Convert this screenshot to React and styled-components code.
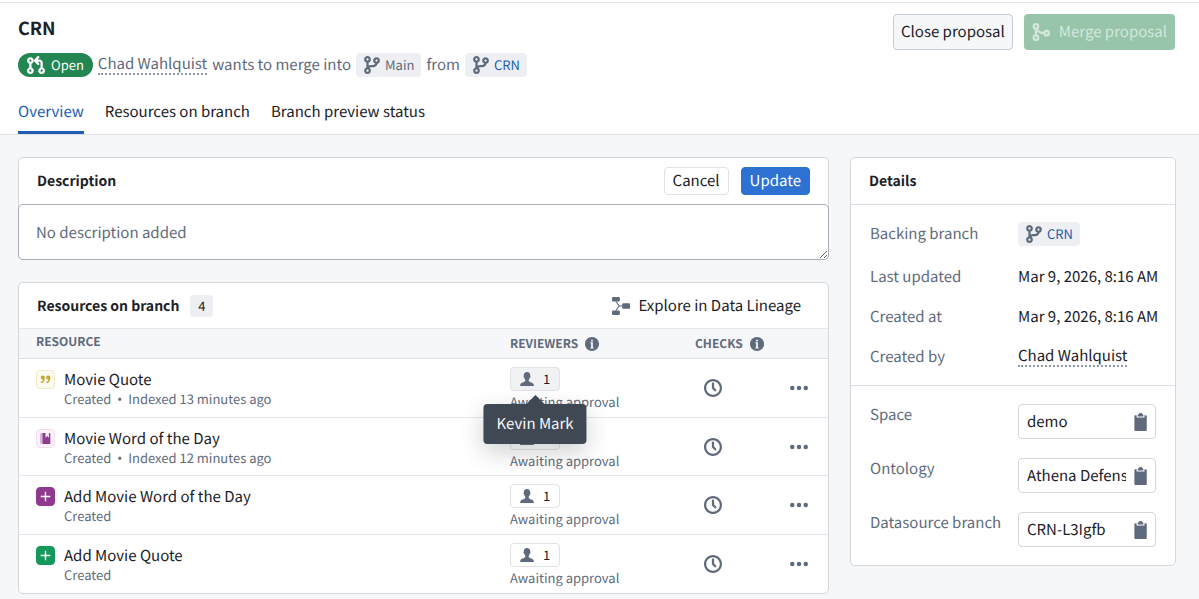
import React, { useState } from "react";
import styled, { createGlobalStyle } from "styled-components";

const GlobalStyle = createGlobalStyle`
    * {
        box-sizing: border-box;
    }
    body {
        margin: 0;
        background: #f6f7f9;
        color: #1c2127;
        font-family: "Noto Sans CJK SC", "Noto Sans", sans-serif;
        font-size: 15px;
        line-height: 22px;
        text-rendering: geometricPrecision;
    }
    button,
    input,
    textarea {
        margin: 0;
        font: inherit;
        color: inherit;
        text-rendering: inherit;
    }
`;

const icons = {
    branch: (
        <path d="M12 1c-1.66 0-3 1.34-3 3 0 1.25.76 2.32 1.85 2.77A2.02 2.02 0 019 8H7c-.73 0-1.41.21-2 .55V5.82C6.16 5.4 7 4.3 7 3c0-1.66-1.34-3-3-3S1 1.34 1 3c0 1.3.84 2.4 2 2.82v4.37c-1.16.4-2 1.51-2 2.81 0 1.66 1.34 3 3 3s3-1.34 3-3c0-1.04-.53-1.95-1.32-2.49.35-.31.81-.51 1.32-.51h2c1.92 0 3.52-1.35 3.91-3.15A2.996 2.996 0 0012 1zM4 2c.55 0 1 .45 1 1s-.45 1-1 1-1-.45-1-1 .45-1 1-1zm0 12c-.55 0-1-.45-1-1s.45-1 1-1 1 .45 1 1-.45 1-1 1zm8-9c-.55 0-1-.45-1-1s.45-1 1-1 1 .45 1 1-.45 1-1 1z" />
    ),
    pull: (
        <path d="M3 1c-1.66 0-3 1.34-3 3 0 1.3.84 2.4 2 2.82v3.37C.84 10.6 0 11.7 0 13c0 1.66 1.34 3 3 3s3-1.34 3-3c0-1.3-.84-2.4-2-2.82V6.82C5.16 6.4 6 5.3 6 4c0-1.66-1.34-3-3-3zm0 13c-.55 0-1-.45-1-1s.45-1 1-1 1 .45 1 1-.45 1-1 1zM3 5c-.55 0-1-.45-1-1s.45-1 1-1 1 .45 1 1-.45 1-1 1zm11 5.18V6c0-1.66-1.34-3-3-3H9.41l1.29-1.29c.19-.18.3-.43.3-.71A1.003 1.003 0 009.29.29l-3 3C6.11 3.47 6 3.72 6 4c0 .28.11.53.29.71l3 3a1.003 1.003 0 001.42-1.42L9.41 5H11c.55 0 1 .45 1 1v4.18A2.996 2.996 0 0013 16c1.66 0 3-1.34 3-3 0-1.3-.84-2.4-2-2.82zM13 14c-.55 0-1-.45-1-1s.45-1 1-1 1 .45 1 1-.45 1-1 1z" />
    ),
    merge: (
        <g fill="none" stroke="currentColor" strokeWidth="2">
            <circle cx="3.500" cy="3" r="2" />
            <circle cx="3.500" cy="13" r="2" />
            <circle cx="13" cy="9" r="2" />
            <path d="M3.500 5v6M4 4.500C5 7.500 7 9 11 9" />
        </g>
    ),
    info: (
        <path d="M8 0C3.58 0 0 3.58 0 8s3.58 8 8 8 8-3.58 8-8-3.58-8-8-8zM7 3h2v2H7V3zm3 10H6v-1h1V7H6V6h3v6h1v1z" />
    ),
    time: (
        <path d="M8 0C3.58 0 0 3.58 0 8s3.58 8 8 8 8-3.58 8-8-3.58-8-8-8zm0 14c-3.31 0-6-2.69-6-6s2.69-6 6-6 6 2.69 6 6-2.69 6-6 6zm1-6.41V4c0-.55-.45-1-1-1s-1 .45-1 1v4c0 .28.11.53.29.71l2 2a1.003 1.003 0 001.42-1.42L9 7.59z" />
    ),
    clipboard: (
        <path d="M11 2c0-.55-.45-1-1-1h.22C9.88.4 9.24 0 8.5 0S7.12.4 6.78 1H7c-.55 0-1 .45-1 1v1h5V2zm2 0h-1v2H5V2H4c-.55 0-1 .45-1 1v12c0 .55.45 1 1 1h9c.55 0 1-.45 1-1V3c0-.55-.45-1-1-1z" />
    ),
    person: (
        <path d="M8 0C5.7 0 4.2 1.6 4.3 4c0 .5-.4.7-.3 1.300.1.6.5.8.7 1.100.2 1 .7 1.700 1.300 2.200v1.700C5.200 11.800 1 12 .4 14.300c-.2.5-.3 1-.3 1.700h15.800c0-.7-.1-1.200-.3-1.700C15 12 10.800 11.800 10 10.300V8.600c.6-.5 1.100-1.200 1.300-2.200.2-.3.6-.5.7-1.100.1-.6-.3-.8-.3-1.300C11.800 1.600 10.300 0 8 0z" />
    ),
    more: (
        <g>
            <circle cx="2" cy="8" r="2" />
            <circle cx="8" cy="8" r="2" />
            <circle cx="14" cy="8" r="2" />
        </g>
    ),
    lineage: (
        <g>
            <rect x="0" y="0" width="7" height="4" rx="1" />
            <rect x="0" y="12" width="7" height="4" rx="1" />
            <rect x="9" y="5.5" width="7" height="5" rx="1" />
            <path
                d="M3.500 4L6.500 8L3.500 12M6 8h3"
                fill="none"
                stroke="currentColor"
                strokeWidth="1"
            />
        </g>
    ),
    citation: (
        <path d="M15.020 5c0-1.660-1.340-3-3-3s-3 1.340-3 3a2.996 2.996 0 003.600 2.940C12.100 9.760 11.140 11 10.020 11c-.55 0-1 .45-1 1s.45 1 1 1c2.800 0 5-3.500 5-8zm-11-3c-1.660 0-3 1.340-3 3a2.996 2.996 0 003.600 2.940C4.100 9.760 3.140 11 2.020 11c-.55 0-1 .45-1 1s.45 1 1 1c2.800 0 5-3.500 5-8 0-1.660-1.340-3-3-3z" />
    ),
    book: (
        <path d="M1 1.500C1 .7 1.500 0 2 0v16c-.6 0-1-.5-1-1V1.500zM3.500 0H8v7l2.500-2.500L13 7V0h1c.6 0 1 .4 1 1v14c0 .6-.4 1-1 1H3.500V0z" />
    ),
    plus: <path d="M7 1h2v6h6v2H9v6H7V9H1V7h6V1z" />,
};

function Icon({ name, size = 18 }) {
    return (
        <Svg width={size} height={size} viewBox="0 0 16 16" aria-hidden="true">
            {icons[name]}
        </Svg>
    );
}

function BranchTag({ children, linked }) {
    return (
        <Tag as={linked ? "a" : "span"} href={linked ? "#branch" : undefined}>
            <Icon name="branch" />
            <TagText $linked={linked}>{children}</TagText>
        </Tag>
    );
}

const tabs = ["Overview", "Resources on branch", "Branch preview status"];

const resources = [
    {
        title: "Movie Quote",
        note: "Indexed 13 minutes ago",
        icon: "citation",
        color: "#c9a52c",
        background: "#fdfaf0",
        border: "#f3e9c4",
        tooltip: "Kevin Mark",
    },
    {
        title: "Movie Word of the Day",
        note: "Indexed 12 minutes ago",
        icon: "book",
        color: "#8f398f",
        background: "#fbf2fb",
        border: "#f0dcf0",
    },
    {
        title: "Add Movie Word of the Day",
        icon: "plus",
        color: "#ffffff",
        background: "#8f398f",
        border: "#8f398f",
    },
    {
        title: "Add Movie Quote",
        icon: "plus",
        color: "#ffffff",
        background: "#15995b",
        border: "#15995b",
    },
];

const fields = [
    { id: "space", label: "Space", value: "demo" },
    { id: "ontology", label: "Ontology", value: "Athena Defense" },
    { id: "datasource", label: "Datasource branch", value: "CRN-L3Igfb" },
];

function ResourceRow({ item }) {
    return (
        <Row>
            <td>
                <Resource>
                    <ResourceIcon
                        $color={item.color}
                        $background={item.background}
                        $border={item.border}
                    >
                        <Icon name={item.icon} size={11} />
                    </ResourceIcon>
                    <div>
                        <ResourceTitle>{item.title}</ResourceTitle>
                        <Note>
                            <span>Created</span>
                            {item.note && <Bullet>•</Bullet>}
                            {item.note && <span>{item.note}</span>}
                        </Note>
                    </div>
                </Resource>
            </td>
            <td>
                <Reviewers>
                    <ReviewerAnchor>
                        <ReviewerButton $active={Boolean(item.tooltip)}>
                            <Icon name="person" size={14} />
                            1
                        </ReviewerButton>
                        {item.tooltip && (
                            <Tooltip role="tooltip">{item.tooltip}</Tooltip>
                        )}
                    </ReviewerAnchor>
                    <Note>Awaiting approval</Note>
                </Reviewers>
            </td>
            <td>
                <CheckStatus>
                    <Icon name="time" />
                </CheckStatus>
            </td>
            <td>
                <IconButton aria-label={`More actions for ${item.title}`}>
                    <Icon name="more" />
                </IconButton>
            </td>
        </Row>
    );
}

function App() {
    const [tab, setTab] = useState(tabs[0]);
    const [description, setDescription] = useState("");

    return (
        <Page>
            <GlobalStyle />
            <Header>
                <HeaderTop>
                    <div>
                        <Title>CRN</Title>
                        <Meta>
                            <Status>
                                <Icon name="pull" />
                                Open
                            </Status>
                            <UserLink href="#user">Chad Wahlquist</UserLink>
                            <span>wants to merge into</span>
                            <BranchTag>Main</BranchTag>
                            <span>from</span>
                            <BranchTag linked>CRN</BranchTag>
                        </Meta>
                    </div>
                    <Actions>
                        <CloseButton>Close proposal</CloseButton>
                        <MergeButton disabled>
                            <Icon name="merge" />
                            Merge proposal
                        </MergeButton>
                    </Actions>
                </HeaderTop>
                <Tabs role="tablist">
                    {tabs.map((el) => (
                        <Tab
                            key={el}
                            role="tab"
                            aria-selected={el === tab}
                            $active={el === tab}
                            onClick={() => setTab(el)}
                        >
                            {el}
                        </Tab>
                    ))}
                </Tabs>
            </Header>
            <Content>
                <Main>
                    <Card>
                        <CardHeader>
                            <CardTitle id="description-title">
                                Description
                            </CardTitle>
                            <CardActions>
                                <SmallButton>Cancel</SmallButton>
                                <SmallButton $primary>Update</SmallButton>
                            </CardActions>
                        </CardHeader>
                        <Description
                            aria-labelledby="description-title"
                            placeholder="No description added"
                            value={description}
                            onChange={(el) => setDescription(el.target.value)}
                        />
                    </Card>
                    <Card>
                        <CardHeader $height={45}>
                            <CardTitle>
                                Resources on branch
                                <Count>4</Count>
                            </CardTitle>
                            <LineageButton>
                                <Icon name="lineage" />
                                Explore in Data Lineage
                            </LineageButton>
                        </CardHeader>
                        <Table>
                            <colgroup>
                                <col />
                                <Col $width={185} />
                                <Col $width={75} />
                                <Col $width={58} />
                            </colgroup>
                            <thead>
                                <tr>
                                    <Th scope="col">RESOURCE</Th>
                                    <Th scope="col">
                                        <ThInner>
                                            REVIEWERS
                                            <Icon name="info" size={14} />
                                        </ThInner>
                                    </Th>
                                    <Th scope="col" colSpan={2}>
                                        <ThInner>
                                            CHECKS
                                            <Icon name="info" size={14} />
                                        </ThInner>
                                    </Th>
                                </tr>
                            </thead>
                            <tbody>
                                {resources.map((item) => (
                                    <ResourceRow key={item.title} item={item} />
                                ))}
                            </tbody>
                        </Table>
                    </Card>
                </Main>
                <Card as="aside">
                    <CardHeader $height={47} $divided>
                        <CardTitle>Details</CardTitle>
                    </CardHeader>
                    <Facts>
                        <Fact $tall>
                            <dt>Backing branch</dt>
                            <dd>
                                <BranchTag linked>CRN</BranchTag>
                            </dd>
                        </Fact>
                        <Fact>
                            <dt>Last updated</dt>
                            <dd>Mar 9, 2026, 8:16 AM</dd>
                        </Fact>
                        <Fact>
                            <dt>Created at</dt>
                            <dd>Mar 9, 2026, 8:16 AM</dd>
                        </Fact>
                        <Fact>
                            <dt>Created by</dt>
                            <dd>
                                <UserLink href="#user">Chad Wahlquist</UserLink>
                            </dd>
                        </Fact>
                    </Facts>
                    <Fields>
                        {fields.map((el) => (
                            <Field key={el.id}>
                                <label htmlFor={el.id}>{el.label}</label>
                                <CopyBox>
                                    <CopyInput
                                        id={el.id}
                                        value={el.value}
                                        readOnly
                                    />
                                    <IconButton aria-label={`Copy ${el.label}`}>
                                        <Icon name="clipboard" />
                                    </IconButton>
                                </CopyBox>
                            </Field>
                        ))}
                    </Fields>
                </Card>
            </Content>
        </Page>
    );
}

const Svg = styled.svg`
    display: block;
    flex: none;
    fill: currentColor;
`;

const Page = styled.div`
    padding-top: 2px;
    background: #ffffff;
`;

const Header = styled.header`
    padding: 0 24px 0 18px;
    border-top: 1px solid #e5e8eb;
    border-bottom: 1px solid #dce0e5;
`;

const HeaderTop = styled.div`
    display: flex;
    justify-content: space-between;
    align-items: flex-start;
    padding-top: 11px;
`;

const Title = styled.h1`
    margin: 3px 0 14px;
    font-size: 18px;
    font-weight: 700;
    line-height: 22px;
`;

const Meta = styled.div`
    display: flex;
    flex-wrap: wrap;
    align-items: center;
    gap: 5px;
    color: #5f6b7c;
`;

const Status = styled.span`
    display: flex;
    align-items: center;
    gap: 6px;
    height: 24px;
    padding: 0 9px;
    border-radius: 12px;
    background: #238551;
    color: #ffffff;
    font-size: 13px;
`;

const UserLink = styled.a`
    color: inherit;
    line-height: 18px;
    text-decoration: none;
    border-bottom: 2px dotted #8f99a8;
`;

const Tag = styled.span`
    display: inline-flex;
    align-items: center;
    gap: 4px;
    height: 24px;
    padding: 0 7px;
    border-radius: 4px;
    background: #eeeff2;
    color: #5f6b7c;
    font-size: 13px;
    text-decoration: none;
`;

const TagText = styled.span`
    color: ${({ $linked }) => ($linked ? "#215db0" : "#5f6b7c")};
`;

const Actions = styled.div`
    display: flex;
    gap: 11px;
`;

const CloseButton = styled.button`
    height: 36px;
    padding: 0 7px;
    border: 1px solid #c5cbd3;
    border-radius: 4px;
    background: #f6f7f9;
    white-space: nowrap;
`;

const MergeButton = styled.button`
    display: flex;
    align-items: center;
    gap: 9px;
    height: 36px;
    padding: 0 8px;
    border: 0;
    border-radius: 4px;
    background: #98c5aa;
    color: #d3e7db;
    white-space: nowrap;
`;

const Tabs = styled.div`
    display: flex;
    gap: 21px;
    margin-top: 11px;
`;

const Tab = styled.button`
    height: 46px;
    padding: 5px 0 0;
    border: 0;
    border-bottom: 3px solid
        ${({ $active }) => ($active ? "#215db0" : "transparent")};
    background: none;
    color: ${({ $active }) => ($active ? "#215db0" : "#1c2127")};
`;

const Content = styled.div`
    display: grid;
    grid-template-columns: minmax(0, 1fr) 326px;
    align-items: start;
    gap: 21px;
    padding: 22px 23px 5px 18px;
    background: #f6f7f9;
`;

const Main = styled.main`
    display: flex;
    flex-direction: column;
    gap: 22px;
`;

const Card = styled.section`
    border: 1px solid #d3d7dc;
    border-radius: 5px;
    background: #ffffff;
`;

const CardHeader = styled.div`
    display: flex;
    justify-content: space-between;
    align-items: center;
    height: ${({ $height = 46 }) => $height}px;
    padding: 0 18px;
    ${({ $divided }) => $divided && "border-bottom: 1px solid #dce0e5;"}
`;

const CardTitle = styled.h2`
    display: flex;
    align-items: center;
    gap: 11px;
    margin: 0;
    font-size: 14px;
    font-weight: 700;
`;

const CardActions = styled.div`
    display: flex;
    gap: 12px;
`;

const SmallButton = styled.button`
    height: 28px;
    padding: 0 8px;
    border: 1px solid ${({ $primary }) => ($primary ? "#2d72d2" : "#dfe2e6")};
    border-radius: 4px;
    background: ${({ $primary }) => ($primary ? "#2d72d2" : "#ffffff")};
    color: ${({ $primary }) => ($primary ? "#ffffff" : "#1c2127")};
    line-height: 20px;
`;

const Description = styled.textarea`
    display: block;
    width: calc(100% + 2px);
    height: 56px;
    margin: 0 -1px -1px;
    padding: 17px 17px 15px;
    border: 1px solid #a9aeb5;
    border-radius: 5px;
    background: #ffffff;
    resize: vertical;

    &::placeholder {
        color: #5f6b7c;
    }
`;

const Count = styled.span`
    min-width: 23px;
    border-radius: 4px;
    background: #eeeff2;
    font-size: 13px;
    font-weight: 400;
    text-align: center;
`;

const LineageButton = styled.button`
    display: flex;
    align-items: center;
    gap: 8px;
    padding: 0 9px;
    border: 0;
    background: none;

    svg {
        color: #5f6b7c;
    }
`;

const Table = styled.table`
    width: 100%;
    table-layout: fixed;
    border-collapse: separate;
    border-spacing: 0;

    th:first-child,
    td:first-child {
        padding-left: 17px;
    }
`;

const Col = styled.col`
    width: ${({ $width }) => $width}px;
`;

const Th = styled.th`
    height: 31px;
    padding: 0;
    border-top: 1px solid #e5e8eb;
    border-bottom: 1px solid #dce0e5;
    background: #f6f7f9;
    color: #5f6b7c;
    font-size: 12px;
    font-weight: 700;
    line-height: 20px;
    text-align: left;

    &:first-child {
        padding-bottom: 3px;
    }
`;

const ThInner = styled.span`
    display: flex;
    align-items: center;
    gap: 7px;
`;

const Row = styled.tr`
    height: 58px;

    &:nth-child(odd) {
        height: 59px;
    }
    td {
        padding: 0;
        border-bottom: 1px solid #e5e8eb;
    }
    td:nth-child(-n + 2) {
        padding-top: 2px;
    }
    &:last-child td {
        border-bottom: 0;
    }
`;

const Resource = styled.div`
    display: flex;
    gap: 9px;
`;

const ResourceIcon = styled.span`
    display: flex;
    flex: none;
    align-items: center;
    justify-content: center;
    width: 19px;
    height: 19px;
    border: 1px solid ${({ $border }) => $border};
    border-radius: 4px;
    background: ${({ $background }) => $background};
    color: ${({ $color }) => $color};
`;

const ResourceTitle = styled.div`
    line-height: 20px;
`;

const Note = styled.div`
    display: flex;
    gap: 6px;
    color: #5f6b7c;
    font-size: 13px;
    line-height: 18px;
`;

const Bullet = styled.span`
    font-family: "Noto Sans", sans-serif;
`;

const Reviewers = styled.div`
    display: flex;
    flex-direction: column;
    align-items: flex-start;
    gap: 2px;
`;

const ReviewerAnchor = styled.div`
    position: relative;
`;

const ReviewerButton = styled.button`
    display: flex;
    align-items: center;
    gap: 9px;
    height: 24px;
    padding: 0 9px;
    border: 1px solid #dfe2e6;
    border-radius: 4px;
    background: ${({ $active }) => ($active ? "#f1f2f4" : "#ffffff")};
    font-size: 13px;

    svg {
        color: #5f6b7c;
    }
`;

const Tooltip = styled.div`
    position: absolute;
    z-index: 1;
    top: 37px;
    left: 50%;
    padding: 9px 13px;
    border-radius: 4px;
    background: #404854;
    box-shadow: 0 8px 24px rgba(17, 20, 24, 0.2);
    color: #f6f7f9;
    transform: translateX(-50%);
    white-space: nowrap;

    &::before {
        content: "";
        position: absolute;
        top: -9px;
        left: 50%;
        border: 9px solid transparent;
        border-top: 0;
        border-bottom-color: #404854;
        transform: translateX(-50%);
    }
`;

const CheckStatus = styled.div`
    padding-left: 9px;
    color: #5f6b7c;
`;

const IconButton = styled.button`
    display: block;
    flex: none;
    margin: 0 auto;
    padding: 0;
    border: 0;
    background: none;
    color: #5f6b7c;
`;

const Facts = styled.dl`
    display: flex;
    flex-direction: column;
    gap: 18px;
    margin: 0;
    padding: 15px 19px 17px;
    border-bottom: 1px solid #dce0e5;
`;

const Fact = styled.div`
    display: grid;
    grid-template-columns: 148px minmax(0, 1fr);
    align-items: center;
    height: ${({ $tall }) => ($tall ? "28px" : "22px")};

    dt {
        color: #5f6b7c;
    }
    dd {
        display: flex;
        margin: 0;
        white-space: nowrap;
    }
`;

const Fields = styled.div`
    display: flex;
    flex-direction: column;
    gap: 19px;
    padding: 18px 19px;
`;

const Field = styled.div`
    display: grid;
    grid-template-columns: 148px minmax(0, 1fr);
    align-items: start;

    label {
        color: #5f6b7c;
    }
`;

const CopyBox = styled.div`
    display: flex;
    align-items: center;
    gap: 5px;
    height: 35px;
    padding: 0 6px 0 8px;
    border: 1px solid #d3d7dc;
    border-radius: 4px;
`;

const CopyInput = styled.input`
    flex: 1;
    min-width: 0;
    padding: 0;
    border: 0;
    outline: 0;
    background: none;
`;

export default App;
